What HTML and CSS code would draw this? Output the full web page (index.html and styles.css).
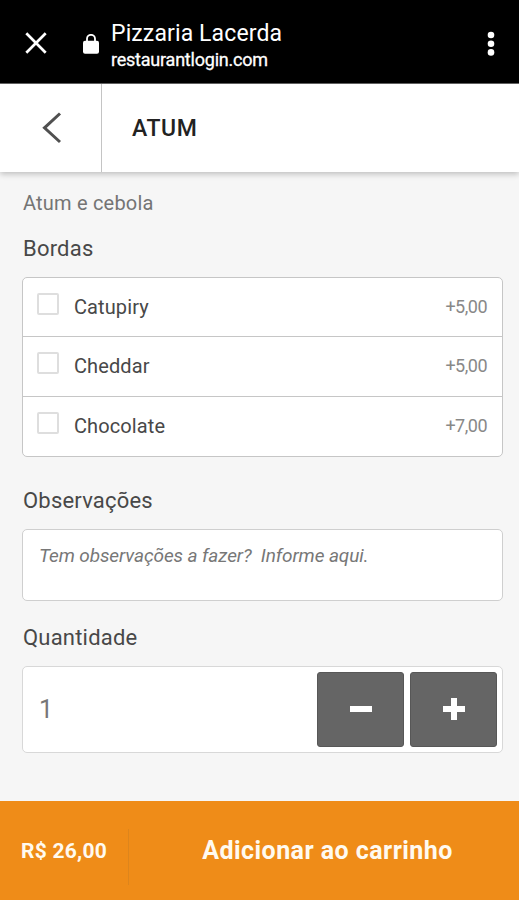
FILE: index.html
```html
<!DOCTYPE html>
<html lang="pt-BR">
<head>
<meta charset="utf-8">
<meta name="viewport" content="width=device-width, initial-scale=1">
<title>Pizzaria Lacerda</title>
<link rel="stylesheet" href="styles.css">
</head>
<body>
<div class="browser-bar">
  <svg class="close" viewBox="0 0 22 22"><path d="M1.3 1.3 20.7 20.7M20.7 1.3 1.3 20.7"/></svg>
  <svg class="lock" viewBox="0 0 16 20"><rect x="0" y="6.8" width="16" height="13" rx="2"/><path d="M4 8V4.8a4 4 0 0 1 8 0V8"/></svg>
  <div class="site">
    <div class="site-name"><span>Pizzaria Lacerda</span></div>
    <div class="site-host"><span>restaurantlogin.com</span></div>
  </div>
  <svg class="more" viewBox="0 0 8 26"><circle cx="4" cy="4" r="3.3"/><circle cx="4" cy="12.7" r="3.3"/><circle cx="4" cy="21.4" r="3.3"/></svg>
</div>
<header class="header">
  <div class="back"><svg viewBox="0 0 20 32"><path d="M18 1.5 2.5 15.8 18 30"/></svg></div>
  <h1><span>ATUM</span></h1>
</header>
<main class="content">
  <p class="description"><span>Atum e cebola</span></p>
  <h2 class="label"><span>Bordas</span></h2>
  <ul class="options">
    <li><i class="checkbox"></i><span class="name">Catupiry</span><span class="price">+5,00</span></li>
    <li><i class="checkbox"></i><span class="name">Cheddar</span><span class="price">+5,00</span></li>
    <li><i class="checkbox"></i><span class="name">Chocolate</span><span class="price">+7,00</span></li>
  </ul>
  <h2 class="label notes-label"><span>Observações</span></h2>
  <div class="notes"><span>Tem observações a fazer?&nbsp; Informe aqui.</span></div>
  <h2 class="label quantity-label"><span>Quantidade</span></h2>
  <div class="quantity">
    <span class="amount">1</span>
    <div class="step"><svg viewBox="0 0 22 22"><path d="M0 11H22"/></svg></div>
    <div class="step"><svg viewBox="0 0 22 22"><path d="M0 11H22M11 0V22"/></svg></div>
  </div>
</main>
<footer class="cart">
  <div class="total"><span>R$ 26,00</span></div>
  <div class="add"><span>Adicionar ao carrinho</span></div>
</footer>
</body>
</html>
```
FILE: styles.css
```css
* { box-sizing: border-box; }
body {
  margin: 0;
  height: 900px;
  display: flex;
  flex-direction: column;
  overflow: hidden;
  background: #f6f6f6;
  color: #484848;
  font-family: Roboto, "Liberation Sans", sans-serif;
}
h1, h2, p, ul { margin: 0; padding: 0; font-weight: 400; }
svg { display: block; }

.browser-bar {
  height: 84px;
  flex: none;
  display: flex;
  padding: 0 24px;
  background: #000;
  border-bottom: 1px solid #666;
  color: #fff;
}
.close { width: 22px; height: 22px; margin: 32px 0 0 1px; fill: none; stroke: #fff; stroke-width: 2.7; }
.lock { width: 16px; height: 20px; margin: 34px 0 0 36px; }
.lock rect { fill: #fff; }
.lock path { fill: none; stroke: #fff; stroke-width: 1.8; }
.site { flex: 1; margin: 19px 0 0 12px; white-space: nowrap; }
.site-name { font-size: 23px; line-height: 29px; letter-spacing: .12px; }
.site-host { font-size: 18px; line-height: 23px; letter-spacing: -.22px; -webkit-text-stroke: .3px #fff; }
.more { width: 8px; height: 26px; margin: 31px 0 0; fill: #fff; }

.header {
  height: 88px;
  flex: none;
  display: flex;
  background: #fff;
  box-shadow: 0 2px 6px rgba(0, 0, 0, .24);
}
.back { width: 102px; padding: 28px 0 0 42px; border-right: 1px solid #c4c4c4; }
.back svg { width: 20px; height: 32px; fill: none; stroke: #505050; stroke-width: 3; }
.header h1 { padding-left: 30px; font-size: 23px; line-height: 90px; font-weight: 500; letter-spacing: .6px; color: #222; }

.content { flex: 1; padding: 14px 16px 0 22px; }
.description { padding-left: 1px; font-size: 20px; line-height: 34px; letter-spacing: .2px; color: #747474; }
.label { padding-left: 1px; height: 43px; font-size: 22px; line-height: 30px; letter-spacing: .2px; margin-top: 14px; }
.options { height: 180px; list-style: none; background: #fff; border: 1px solid #c6c6c6; border-radius: 5px; }
.options li { display: flex; height: 60px; padding: 0 15px 0 14px; border-bottom: 1px solid #c6c6c6; line-height: 59px; }
.options li:first-child { height: 59px; }
.options li:last-child { height: 59px; border-bottom: 0; }
.checkbox { width: 22px; height: 22px; margin-top: 15px; border: 2px solid #dedede; border-radius: 2px; }
.name { flex: 1; margin-left: 15px; font-size: 20px; letter-spacing: .1px; }
.price { font-size: 18px; letter-spacing: -.5px; line-height: 58px; color: #888; }
.notes-label { margin-top: 29px; }
.notes { height: 72px; padding: 10px 16px; background: #fff; border: 1px solid #cfcfcf; border-radius: 5px; font-size: 19px; line-height: 32px; letter-spacing: -.1px; font-style: italic; color: #777; white-space: nowrap; }
.quantity-label { margin-top: 22px; }
.quantity { height: 87px; display: flex; gap: 6px; padding: 5px; background: #fff; border: 1px solid #d8d8d8; border-radius: 5px; }
.amount { flex: 1; padding-left: 11px; font-size: 25px; line-height: 76px; color: #777; }
.step { width: 87px; height: 75px; display: grid; place-items: center; background: #656565; border: 1px solid #575757; border-radius: 3px; }
.step svg { width: 22px; height: 22px; margin-top: -2px; fill: none; stroke: #fff; stroke-width: 6; }

.cart { height: 99px; flex: none; display: flex; align-items: center; background: #ef8c18; color: #fffaf0; font-weight: 700; white-space: nowrap; }
.total { width: 129px; height: 56px; margin-top: 12px; padding-left: 21px; border-right: 1px solid #dd851c; font-size: 21px; line-height: 45px; letter-spacing: .25px; }
.add { flex: 1; margin-top: 0; padding-left: 7px; text-align: center; font-size: 25px; letter-spacing: .45px; }
```
